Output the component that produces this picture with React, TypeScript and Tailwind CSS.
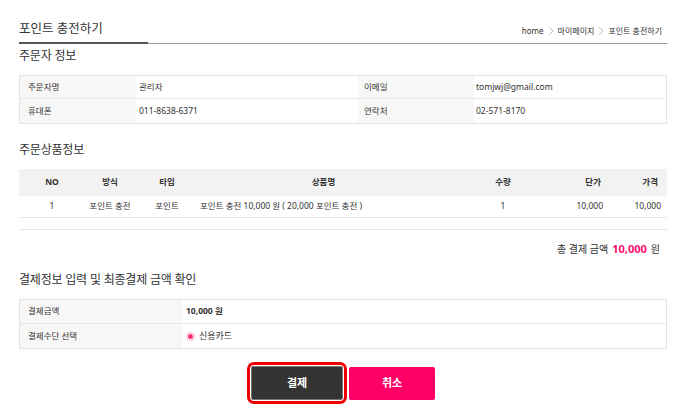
import React from 'react';

const font = { fontFamily: '"Noto Sans", "Noto Sans CJK KR", sans-serif' };

const Chevron = () => (
  <svg width="6" height="10" viewBox="0 0 6 10" className="mx-[4px]">
    <path d="M1 1 L5 5 L1 9" fill="none" stroke="#b5b5b5" strokeWidth="0.9" />
  </svg>
);

const SectionTitle = ({ children, className = '' }: { children: React.ReactNode; className?: string }) => (
  <h3 className={`h-[22px] pt-[1px] leading-[22px] text-[12px] text-[#333] tracking-[-0.2px] ${className}`}>{children}</h3>
);

const App = () => {
  return (
    <div className="w-[683px] h-[407px] overflow-hidden bg-white pl-[19px] pr-[16px] pt-[17px] text-[#333]" style={font}>
      {/* Page header */}
      <div className="flex items-end justify-between h-[25px]">
        <h2 className="text-[12.5px] leading-[20px] mb-[3px] text-[#333]">포인트 충전하기</h2>
        <div className="flex items-center text-[8px] text-[#333] mb-[5px] mr-[5px]">
          <span>home</span>
          <Chevron />
          <span>마이페이지</span>
          <Chevron />
          <span>포인트 충전하기</span>
        </div>
      </div>
      <div className="flex items-center h-[2px]">
        <div className="w-[129px] h-[2px] bg-[#555]" />
        <div className="flex-1 h-px bg-[#999]" />
      </div>

      {/* 주문자 정보 */}
      <SectionTitle>주문자 정보</SectionTitle>
      <div className="mt-[9px] border border-[#e3e3e3] text-[8.5px]">
        <div className="grid grid-cols-[116px_222px_116px_1fr] h-[23px] border-b border-[#e8e8e8]">
          <div className="bg-[#f7f7f7] flex items-center pl-[8px]">주문자명</div>
          <div className="flex items-center pl-[3px]">관리자</div>
          <div className="bg-[#f7f7f7] flex items-center pl-[6px]">이메일</div>
          <div className="flex items-center pl-[2px]">tomjwj@gmail.com</div>
        </div>
        <div className="grid grid-cols-[116px_222px_116px_1fr] h-[24px]">
          <div className="bg-[#f7f7f7] flex items-center pl-[8px]">휴대폰</div>
          <div className="flex items-center pl-[3px]">011-8638-6371</div>
          <div className="bg-[#f7f7f7] flex items-center pl-[6px]">연락처</div>
          <div className="flex items-center pl-[2px]">02-571-8170</div>
        </div>
      </div>

      {/* 주문상품정보 */}
      <SectionTitle className="mt-[14px]">주문상품정보</SectionTitle>
      <div className="mt-[9px] text-[8.5px]">
        <div className="grid grid-cols-[66px_50px_64px_249px_110px_50px_1fr] h-[27px] bg-[#f2f2f2] font-bold items-center">
          <div className="text-center">NO</div>
          <div className="text-center">방식</div>
          <div className="text-center">타입</div>
          <div className="text-center">상품명</div>
          <div className="text-center">수량</div>
          <div className="text-right pr-[7px]">단가</div>
          <div className="text-right pr-[9px]">가격</div>
        </div>
        <div className="grid grid-cols-[66px_50px_64px_249px_110px_50px_1fr] h-[22px] items-center border-b border-[#e5e5e5]">
          <div className="text-center">1</div>
          <div className="text-center">포인트 충전</div>
          <div className="text-center">포인트</div>
          <div className="pl-[1px]">포인트 충전 10,000 원 ( 20,000 포인트 충전 )</div>
          <div className="text-center">1</div>
          <div className="text-right pr-[5px]">10,000</div>
          <div className="text-right pr-[6px]">10,000</div>
        </div>
        <div className="h-[12px] border-b border-[#e5e5e5]" />
      </div>

      {/* 총 결제 금액 */}
      <div className="mt-[9px] h-[20px] flex items-center justify-end pr-[7px] text-[10px] text-[#333]">
        <span>총 결제 금액</span>
        <span className="ml-[4px] text-[11px] font-bold text-[#ff0a6c]">10,000</span>
        <span className="ml-[4px]">원</span>
      </div>

      {/* 결제정보 */}
      <SectionTitle className="mt-[9px]">결제정보 입력 및 최종결제 금액 확인</SectionTitle>
      <div className="mt-[9px] border border-[#e3e3e3] text-[8.5px]">
        <div className="grid grid-cols-[162px_1fr] h-[24px] border-b border-[#e8e8e8]">
          <div className="bg-[#f7f7f7] flex items-center pl-[8px]">결제금액</div>
          <div className="flex items-center pl-[4px] font-bold">10,000 원</div>
        </div>
        <div className="grid grid-cols-[162px_1fr] h-[24px]">
          <div className="bg-[#f7f7f7] flex items-center pl-[8px]">결제수단 선택</div>
          <div className="flex items-center pl-[4px]">
            <span className="w-[9px] h-[9px] rounded-full border border-[#ffb3cf] bg-white flex items-center justify-center">
              <span className="w-[5px] h-[5px] rounded-full bg-[#ff2a78]" />
            </span>
            <span className="ml-[4px] text-[9px]">신용카드</span>
          </div>
        </div>
      </div>

      {/* Buttons */}
      <div className="mt-[13px] flex justify-center gap-[2px] pr-[4px]">
        <div className="rounded-[7px] border-[3px] border-[#ee0000] p-[1px]">
          <button className="w-[92px] h-[34px] bg-[#333] border border-[#777] rounded-[2px] text-white font-bold text-[11px]">결제</button>
        </div>
        <button className="mt-[5px] w-[86px] h-[33px] bg-[#ff0066] rounded-[2px] text-white font-bold text-[11px]">취소</button>
      </div>
    </div>
  );
};

export default App;
